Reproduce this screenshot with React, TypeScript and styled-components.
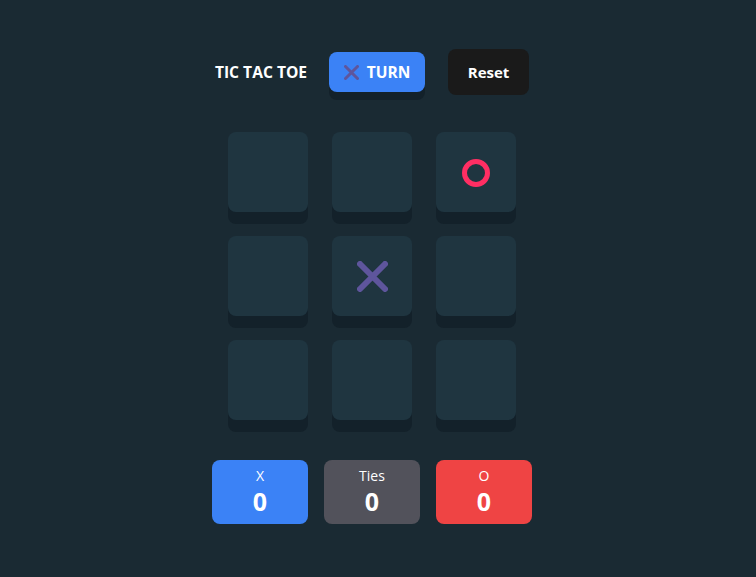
import React, { useState } from 'react'
import { createGlobalStyle, styled } from 'styled-components'

type Mark = 'X' | 'O' | null

const GlobalStyle = createGlobalStyle`
  body {
    margin: 0;
    background: #1a2a33;
    font-family: 'Open Sans', 'Noto Sans', sans-serif;
    color: #fff;
  }
`

const Page = styled.div`
  min-height: 577px;
  padding: 49px 12px 0 0;
  box-sizing: border-box;
  display: flex;
  flex-direction: column;
  align-items: center;
`

const Header = styled.div`
  display: flex;
  align-items: center;
  height: 46px;
`

const Title = styled.h1`
  margin: 0 22px 0 0;
  font-size: 15.6px;
  font-weight: 700;
  letter-spacing: 0;
`

const TurnBadge = styled.div`
  width: 96px;
  height: 40px;
  border-radius: 8px;
  background: #3b82f6;
  box-shadow: 0 8px 0 #13212a;
  display: flex;
  align-items: center;
  justify-content: center;
  gap: 8px;
  font-size: 15.5px;
  font-weight: 700;
  margin-right: 23px;
`

const ResetButton = styled.button`
  width: 81px;
  height: 46px;
  border: none;
  border-radius: 8px;
  background: #1a1a1a;
  color: #fff;
  font-family: inherit;
  font-size: 15px;
  font-weight: 700;
  cursor: pointer;
`

const Board = styled.div`
  display: grid;
  grid-template-columns: repeat(3, 80px);
  grid-auto-rows: 80px;
  gap: 24px;
  margin-top: 37px;
`

const Cell = styled.button`
  border: none;
  padding: 0;
  border-radius: 8px;
  background: #1f3540;
  box-shadow: 0 12px 0 #13212a;
  display: flex;
  align-items: center;
  justify-content: center;
  cursor: pointer;
`

const Scores = styled.div`
  display: flex;
  gap: 16px;
  margin-top: 40px;
`

const ScoreCard = styled.div<{ $bg: string }>`
  width: 96px;
  height: 64px;
  border-radius: 8px;
  background: ${(p) => p.$bg};
  display: flex;
  flex-direction: column;
  align-items: center;
  justify-content: center;
`

const ScoreLabel = styled.span`
  font-size: 14px;
  line-height: 20px;
  margin-top: -3px;
`

const ScoreValue = styled.span`
  font-size: 25px;
  font-weight: 700;
  line-height: 30px;
`

const XIcon = ({ size, stroke }: { size: number; stroke: number }) => (
  <svg width={size} height={size} viewBox={`0 0 ${size} ${size}`}>
    <path
      d={`M${stroke / 2} ${stroke / 2} L${size - stroke / 2} ${size - stroke / 2} M${size - stroke / 2} ${stroke / 2} L${stroke / 2} ${size - stroke / 2}`}
      stroke="#5e559c"
      strokeWidth={stroke}
      strokeLinecap="round"
      fill="none"
    />
  </svg>
)

const OIcon = () => (
  <svg width={30} height={30} viewBox="0 0 30 30" style={{ marginTop: 2 }}>
    <circle cx={15} cy={15} r={11.5} stroke="#ff2e63" strokeWidth={5} fill="none" />
  </svg>
)

export default function App() {
  const [cells] = useState<Mark[]>([null, null, 'O', null, 'X', null, null, null, null])

  return (
    <>
      <GlobalStyle />
      <Page>
        <Header>
          <Title>TIC TAC TOE</Title>
          <TurnBadge>
            <XIcon size={15} stroke={3} />
            TURN
          </TurnBadge>
          <ResetButton>Reset</ResetButton>
        </Header>
        <Board>
          {cells.map((c, i) => (
            <Cell key={i}>
              {c === 'X' && <XIcon size={31} stroke={6} />}
              {c === 'O' && <OIcon />}
            </Cell>
          ))}
        </Board>
        <Scores>
          <ScoreCard $bg="#3b82f6">
            <ScoreLabel>X</ScoreLabel>
            <ScoreValue>0</ScoreValue>
          </ScoreCard>
          <ScoreCard $bg="#52525b">
            <ScoreLabel>Ties</ScoreLabel>
            <ScoreValue>0</ScoreValue>
          </ScoreCard>
          <ScoreCard $bg="#ef4444">
            <ScoreLabel>O</ScoreLabel>
            <ScoreValue>0</ScoreValue>
          </ScoreCard>
        </Scores>
      </Page>
    </>
  )
}
